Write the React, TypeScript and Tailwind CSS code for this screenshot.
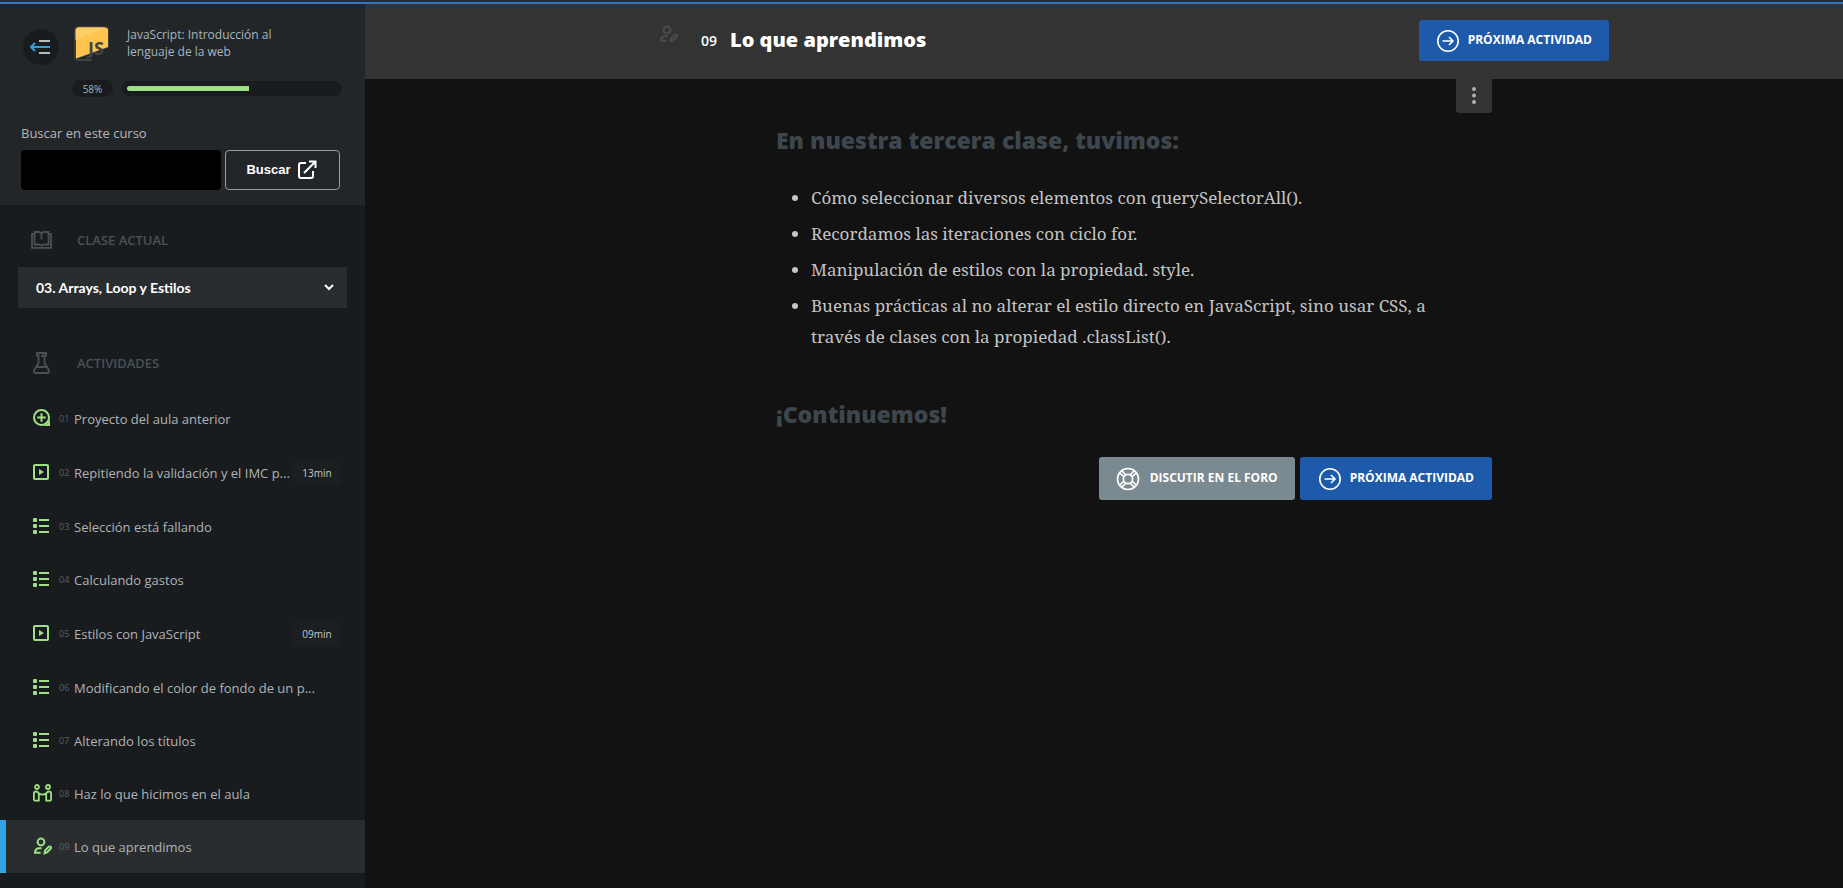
import type { ReactNode } from "react";

type Kind = "project" | "video" | "list" | "practice" | "learned";

interface Activity {
  number: string;
  title: string;
  kind: Kind;
  duration?: string;
  active?: boolean;
}

const activities: Activity[] = [
  { number: "01", title: "Proyecto del aula anterior", kind: "project" },
  { number: "02", title: "Repitiendo la validación y el IMC p...", kind: "video", duration: "13min" },
  { number: "03", title: "Selección está fallando", kind: "list" },
  { number: "04", title: "Calculando gastos", kind: "list" },
  { number: "05", title: "Estilos con JavaScript", kind: "video", duration: "09min" },
  { number: "06", title: "Modificando el color de fondo de un p...", kind: "list" },
  { number: "07", title: "Alterando los títulos", kind: "list" },
  { number: "08", title: "Haz lo que hicimos en el aula", kind: "practice" },
  { number: "09", title: "Lo que aprendimos", kind: "learned", active: true },
];

const summary = [
  "Cómo seleccionar diversos elementos con querySelectorAll().",
  "Recordamos las iteraciones con ciclo for.",
  "Manipulación de estilos con la propiedad. style.",
  "Buenas prácticas al no alterar el estilo directo en JavaScript, sino usar CSS, a través de clases con la propiedad .classList().",
];

function LearnedIcon() {
  return (
    <svg width="19" height="18" viewBox="0 0 19 18" fill="none" stroke="currentColor" strokeWidth="2" aria-hidden="true">
      <circle cx="8" cy="5" r="3.4" />
      <path d="M8.5 11.2H6.4C3.6 11.2 2 12.8 2 15.8H7.6" />
      <path d="M11.6 16.2l.5-2.8 3.6-3.6a1.3 1.3 0 0 1 1.9 0 1.3 1.3 0 0 1 0 1.9L14 15.4z" />
    </svg>
  );
}

function ActivityIcon({ kind }: { kind: Kind }) {
  if (kind === "project")
    return (
      <svg width="18" height="18" viewBox="0 0 18 18" fill="none" stroke="currentColor" aria-hidden="true">
        <circle cx="8.5" cy="8.5" r="7.5" strokeWidth="2" />
        <path d="M8.5 4.2v8.6M4.2 8.5h8.6" strokeWidth="2" />
        <path d="M17 8.5V17H8.5a8.5 8.5 0 0 0 8.5-8.5z" fill="currentColor" stroke="none" />
      </svg>
    );
  if (kind === "video")
    return (
      <svg width="16" height="16" viewBox="0 0 16 16" aria-hidden="true">
        <rect x="1" y="1" width="14" height="14" rx="1" fill="none" stroke="currentColor" strokeWidth="2" />
        <path d="M6 5l5 3-5 3z" fill="currentColor" />
      </svg>
    );
  if (kind === "list")
    return (
      <svg width="16" height="16" viewBox="0 0 16 16" fill="currentColor" aria-hidden="true">
        <rect x="0" y="0" width="4" height="4" rx="1" />
        <rect x="0" y="6" width="4" height="4" rx="1" />
        <rect x="0" y="12" width="4" height="4" rx="1" />
        <rect x="6" y="1" width="10" height="2" />
        <rect x="6" y="7" width="10" height="2" />
        <rect x="6" y="13" width="10" height="2" />
      </svg>
    );
  if (kind === "practice")
    return (
      <svg width="19" height="18" viewBox="0 0 19 18" fill="none" stroke="currentColor" strokeWidth="1.8" aria-hidden="true">
        <circle cx="4" cy="3" r="2" />
        <circle cx="15" cy="3" r="2" />
        <path d="M.9 16.6V9.5Q.9 7.5 3 7.5q2 0 3.2 2.2l2.6 1M5.8 10v6.6H.9" />
        <path d="M18.1 16.6V9.5q0-2-2.1-2-2 0-3.2 2.2l-2.6 1H8.5M13.2 10v6.6h4.9" />
      </svg>
    );
  return <LearnedIcon />;
}

function ArrowCircle() {
  return (
    <svg width="24" height="24" viewBox="0 0 24 24" fill="none" stroke="currentColor" strokeWidth="1.6" aria-hidden="true">
      <circle cx="12" cy="12" r="10.2" />
      <path d="M6.5 12h10M13 8l4 4-4 4" />
    </svg>
  );
}

function Lifebuoy() {
  return (
    <svg width="24" height="24" viewBox="0 0 24 24" fill="none" stroke="currentColor" strokeWidth="1.6" aria-hidden="true">
      <circle cx="12" cy="12" r="10.5" />
      <circle cx="12" cy="12" r="4.6" />
      <path d="M7.9 9.9L4 6M9.9 7.9L6 4M16.1 9.9L20 6M14.1 7.9L18 4M7.9 14.1L4 18M9.9 16.1L6 20M16.1 14.1L20 18M14.1 16.1L18 20" />
    </svg>
  );
}

function CourseLogo() {
  return (
    <svg width="36" height="36" viewBox="0 0 36 36" className="shrink-0" aria-hidden="true">
      <rect x="0" y="0" width="35" height="35" rx="4" fill="#3a3c3d" />
      <path d="M4 1.5h27a3 3 0 0 1 3 3V21L2 32.5V4a3 3 0 0 1 2-2.5z" fill="#ffc550" />
      <path d="M4 1.5h27L1.5 14V4A3 3 0 0 1 4 1.500z" fill="#ffcd68" />
      <path d="M35 21.5L5 32.6V36H36z" fill="#232629" />
      <path d="M4 34h14" stroke="#4a4c4d" strokeWidth="1.5" />
      <text x="14" y="29" fontFamily="Open Sans, sans-serif" fontWeight="700" fontSize="18" fill="#414345">JS</text>
    </svg>
  );
}

function NextLink({ className }: { className: string }) {
  return (
    <a href="#siguiente" className={`flex items-center gap-2 rounded-[3px] bg-[#1e5aaa] text-[12px] leading-4 font-bold text-white ${className}`}>
      <ArrowCircle />
      <span className="pb-[2px]">PRÓXIMA ACTIVIDAD</span>
    </a>
  );
}

function SectionTitle({ icon, children }: { icon: ReactNode; children: ReactNode }) {
  return (
    <h2 className="flex h-4 items-center pl-[13px] text-[13px] leading-4 font-semibold text-[#4a5155]">
      <span className="flex w-[46px] justify-center pr-[25px]">{icon}</span>
      {children}
    </h2>
  );
}

function Sidebar() {
  return (
    <aside className="w-[365px] shrink-0 bg-[#191c1f]">
      <div className="bg-[#232629] px-[21px] pt-[22px] pb-[15px]">
        <div className="flex items-end">
          <button type="button" aria-label="Cerrar menú" className="ml-[2px] flex size-9 shrink-0 items-center justify-center rounded-full bg-[#191c1f] pr-[3px]">
            <svg width="20" height="14" viewBox="0 0 20 14" fill="none" strokeWidth="2" aria-hidden="true">
              <path d="M9 1h11M9 13h11" stroke="#b4bcc0" />
              <path d="M1 7h19M5 3L1 7l4 4" stroke="#2f9fd8" />
            </svg>
          </button>
          <div className="ml-[15px] flex gap-[17px] pb-[3px]">
            <CourseLogo />
            <a href="#curso" className="w-40 text-[12px] leading-[17px] text-[#a3b5bd]">
              JavaScript: Introducción al lenguaje de la web
            </a>
          </div>
        </div>
        <div className="mt-[15px] mr-[2px] ml-[51px] flex items-center gap-[9px]">
          <span className="flex h-[17px] w-[41px] items-center justify-center rounded-full bg-[#191c1f] text-[10px] leading-4 text-[#a3b5bd]">58%</span>
          <div role="progressbar" aria-label="Progreso" aria-valuenow={58} className="h-[15px] flex-1 rounded-full bg-[#191c1f] p-[5px]">
            <div className="h-[5px] rounded-l-full bg-[#9fe084]" style={{ width: "58%" }} />
          </div>
        </div>
        <form className="mt-[26px]" onSubmit={(e) => e.preventDefault()}>
          <label htmlFor="search" className="block text-[13px] leading-5 text-[#b4b7b9]">Buscar en este curso</label>
          <div className="mt-[7px] flex gap-1 pr-1">
            <input id="search" className="h-10 w-[200px] rounded bg-black px-3 text-white" />
            <button type="submit" className="flex h-10 flex-1 items-center justify-center gap-1 rounded border border-[#9a9c9e] font-['Liberation_Sans',sans-serif] text-[13px] font-bold text-white">
              Buscar
              <svg width="24" height="24" viewBox="0 0 24 24" fill="none" stroke="currentColor" strokeWidth="2" aria-hidden="true">
                <path d="M11 5H6a2 2 0 0 0-2 2v11a2 2 0 0 0 2 2h10a2 2 0 0 0 2-2v-5M9 15L20 4M14 3.5h6.5V10" />
              </svg>
            </button>
          </div>
        </form>
      </div>

      <div className="px-[18px] pt-[27px]">
        <SectionTitle
          icon={
            <svg width="21" height="18" viewBox="0 0 21 18" fill="none" stroke="currentColor" strokeWidth="1.8" aria-hidden="true" className="shrink-0">
              <path d="M3.5 2.8H1v14h19v-14h-2.5M3.5 1h5l2 1.5 2-1.5h5v12.5h-5l-2 1-2-1h-5zM10.5 2.5v6" />
            </svg>
          }
        >
          CLASE ACTUAL
        </SectionTitle>
        <div className="mt-[19px] grid items-center">
          <select aria-label="Clase actual" className="col-start-1 row-start-1 h-[41px] w-full appearance-none rounded-none bg-[#2a2d30] pl-[18px] font-[Lato,sans-serif] text-[14px] font-bold text-white">
            <option>03. Arrays, Loop y Estilos</option>
          </select>
          <svg width="10" height="7" viewBox="0 0 10 7" fill="none" stroke="#fff" strokeWidth="2" aria-hidden="true" className="pointer-events-none col-start-1 row-start-1 mr-[13px] justify-self-end">
            <path d="M1 1l4 4 4-4" />
          </svg>
        </div>
        <div className="mt-[47px]">
          <SectionTitle
            icon={
              <svg width="17" height="22" viewBox="0 0 17 22" fill="none" stroke="currentColor" strokeWidth="1.8" aria-hidden="true" className="shrink-0">
                <path d="M4 1h9v2.5h-1.5V11l4.5 7.5q.5 2.5-2 2.5H3q-2.5 0-2-2.5L5.5 11V3.5H4zM3.5 15h10M8 4h3" />
              </svg>
            }
          >
            ACTIVIDADES
          </SectionTitle>
        </div>
      </div>

      <nav aria-label="Actividades" className="mt-[21px]">
        <ul>
          {activities.map((a) => (
            <li key={a.number}>
              <a
                href={`#${a.number}`}
                aria-current={a.active ? "page" : undefined}
                className={`flex items-center border-l-[6px] pr-6 pl-[27px] text-[13px] leading-5 text-[#b0b3b5] ${a.duration ? "h-[55px]" : "h-[53px]"} ${a.active ? "border-[#2fa4e7] bg-[#2a2d30]" : "border-transparent"}`}
              >
                <span className="flex w-[26px] shrink-0 pb-[2px] text-[#9fe084]">
                  <ActivityIcon kind={a.kind} />
                </span>
                <span className="w-[15px] shrink-0 text-[9px] text-[#5b6063]">{a.number}</span>
                <span className="flex-1 whitespace-nowrap">{a.title}</span>
                {a.duration && (
                  <span className="flex h-6 w-12 items-center justify-center rounded-[3px] bg-[#1b1f22] text-[10px] text-[#c4c7c9]">{a.duration}</span>
                )}
              </a>
            </li>
          ))}
        </ul>
      </nav>
    </aside>
  );
}

export default function App() {
  return (
    <div className="flex min-h-screen flex-col bg-[#121212] font-['Open_Sans','Noto_Sans',sans-serif]">
      <div className="border-t-2 border-[#2a2d30]">
        <div className="h-[2px] bg-[#3474c8]" />
      </div>
      <div className="flex flex-1">
        <Sidebar />
        <main className="flex-1">
          <header className="bg-[#333333] pl-[58px]">
            <div className="mx-auto flex h-[75px] max-w-[952px] items-start justify-between pt-4">
              <div className="flex items-center">
                <span className="w-11 pb-3 pl-[2px] text-[#474c50]">
                  <LearnedIcon />
                </span>
                <h1 className="flex items-center gap-[13px] text-white">
                  <span className="text-[14px] font-semibold">09</span>
                  <span className="text-[20px] leading-10 font-extrabold">Lo que aprendimos</span>
                </h1>
              </div>
              <NextLink className="h-[41px] px-[17px]" />
            </div>
          </header>

          <div className="pl-[60px]">
            <article className="mx-auto max-w-[716px]">
              <div className="flex justify-end">
                <button type="button" aria-label="Más opciones" className="flex h-[34px] w-9 items-center justify-center rounded-b-[3px] bg-[#333333] pb-[2px] text-[#a9b3b8]">
                  <svg width="4" height="17" viewBox="0 0 4 17" fill="currentColor" aria-hidden="true">
                    <circle cx="2" cy="2" r="2" />
                    <circle cx="2" cy="8.5" r="2" />
                    <circle cx="2" cy="15" r="2" />
                  </svg>
                </button>
              </div>
              <h2 className="mt-[11px] text-[23px] leading-8 font-extrabold text-[#3d464d]">En nuestra tercera clase, tuvimos:</h2>
              <ul className="mt-[26px] list-disc space-y-[5px] pr-10 pl-[35px] font-['Noto_Serif','Liberation_Serif',serif] text-[17px] leading-[31px] text-[#c4c4c4]">
                {summary.map((item) => (
                  <li key={item}>{item}</li>
                ))}
              </ul>
              <h2 className="mt-[46px] text-[23px] leading-8 font-extrabold text-[#3d464d]">¡Continuemos!</h2>
              <div className="mt-[27px] flex justify-end gap-[5px]">
                <a href="#foro" className="flex h-[43px] items-center gap-[10px] rounded-[3px] bg-[#7b8a90] px-[17px] text-[12px] leading-4 font-bold text-white">
                  <Lifebuoy />
                  <span className="pb-[2px]">DISCUTIR EN EL FORO</span>
                </a>
                <NextLink className="h-[43px] px-[18px]" />
              </div>
            </article>
          </div>
        </main>
      </div>
    </div>
  );
}
